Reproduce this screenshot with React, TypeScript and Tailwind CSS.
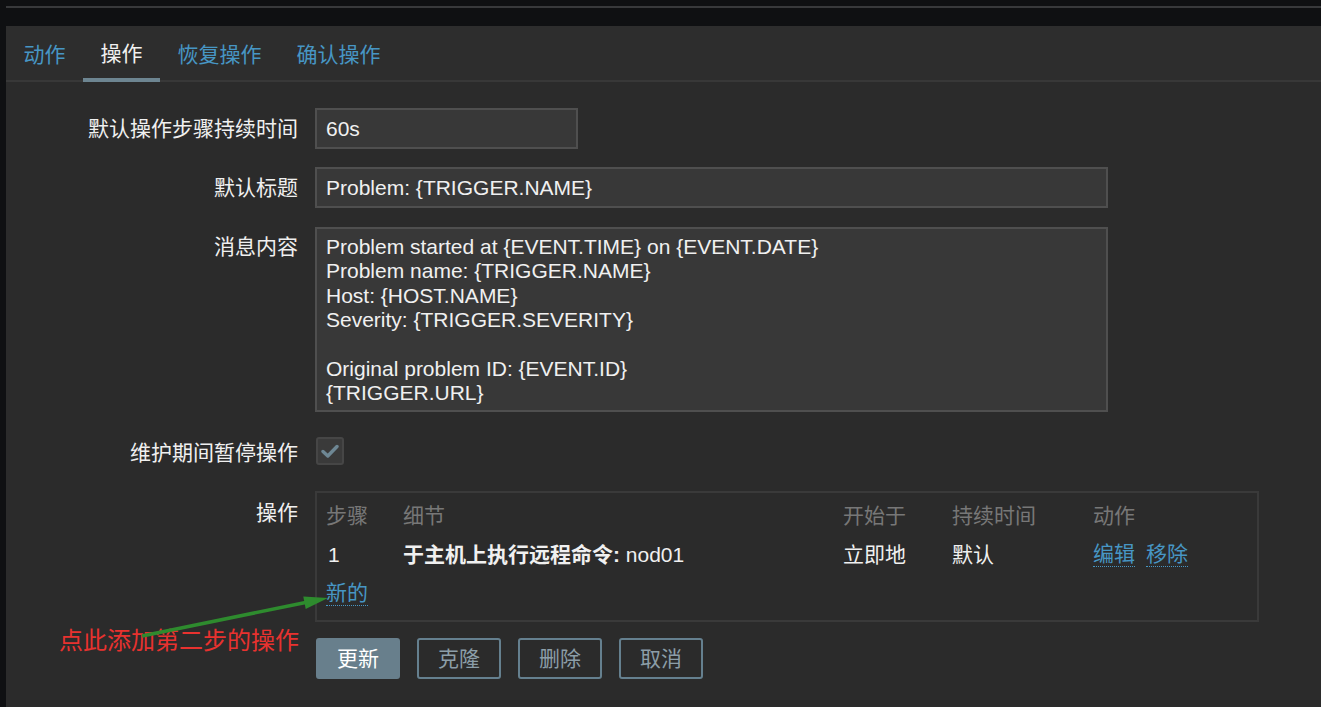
import React from 'react';

const FONT = 'font-["Liberation_Sans","Noto_Sans_CJK_SC",sans-serif]';

const tabs = ['动作', '操作', '恢复操作', '确认操作'];

const message = `Problem started at {EVENT.TIME} on {EVENT.DATE}
Problem name: {TRIGGER.NAME}
Host: {HOST.NAME}
Severity: {TRIGGER.SEVERITY}

Original problem ID: {EVENT.ID}
{TRIGGER.URL}`;

function Label({ children, className = '' }: { children: React.ReactNode; className?: string }) {
  return (
    <div className={`w-[292px] shrink-0 text-right text-[21px] text-[#f0f0f0] ${className}`}>{children}</div>
  );
}

function Link({ children }: { children: React.ReactNode }) {
  return (
    <span className="border-b border-dotted border-[#4796c4] leading-[24px] text-[#4796c4] cursor-pointer">
      {children}
    </span>
  );
}

export default function App() {
  return (
    <div className={`relative flex min-h-[707px] w-[1321px] flex-col overflow-hidden bg-[#0f1012] ${FONT}`}>
      {/* top strip */}
      <div className="h-[26px] pl-[6px] pt-[6px]">
        <div className="h-[2px] bg-[#38393b]" />
      </div>

      <div className="flex flex-1 pl-[6px]">
        <div className="flex-1 bg-[#2b2b2b]">
          {/* Tabs */}
          <div className="flex h-[56px] border-b-2 border-[#383838] bg-[#2d2d2d]">
            {tabs.map((t) => (
              <div
                key={t}
                className={`flex items-center px-[17.5px] pt-[3px] text-[21px] ${
                  t === '操作'
                    ? 'relative z-10 -mb-[2px] border-b-4 border-[#6d8591] text-[#f0f0f0]'
                    : 'text-[#4796c4]'
                }`}
              >
                {t}
              </div>
            ))}
          </div>

          {/* Form */}
          <div className="flex flex-col pt-[26px]">
            <div className="flex items-center gap-[17px]">
              <Label>默认操作步骤持续时间</Label>
              <div className="flex h-[41px] w-[263px] items-center border-2 border-[#4f4f4f] bg-[#383838] pl-[9px] text-[21px] text-[#f0f0f0]">
                60s
              </div>
            </div>

            <div className="mt-[18px] flex items-center gap-[17px]">
              <Label>默认标题</Label>
              <div className="flex h-[41px] w-[793px] items-center border-2 border-[#4f4f4f] bg-[#383838] pl-[9px] text-[21px] text-[#f0f0f0]">
                {'Problem: {TRIGGER.NAME}'}
              </div>
            </div>

            <div className="mt-[19px] flex items-start gap-[17px]">
              <Label className="pt-[8px] leading-[24.4px]">消息内容</Label>
              <div className="h-[185px] w-[793px] overflow-hidden whitespace-pre border-2 border-[#4f4f4f] bg-[#383838] px-[9px] pb-[4px] pt-[6px] text-[21px] leading-[24.4px] text-[#f0f0f0]">
                {message}
              </div>
            </div>

            <div className="mt-[19px] flex h-[40px] items-center gap-[18px]">
              <Label className="pt-[4px]">维护期间暂停操作</Label>
              <div className="flex h-[28px] w-[28px] items-center justify-center rounded-[3px] border-2 border-[#464646] bg-[#3a3a3a]">
                <svg width="18" height="14" viewBox="0 0 18 14" fill="none">
                  <path d="M2 7.5 L6.8 12 L16 2.5" stroke="#6e8794" strokeWidth="3.4" strokeLinecap="round" strokeLinejoin="round" />
                </svg>
              </div>
            </div>

            <div className="mt-[20px] flex items-start gap-[17px]">
              <Label className="pt-[6px]">操作</Label>
              <div className="w-[944px] border-2 border-[#3a3a3a] pb-[7px] pl-[9px] pt-[3px] text-[21px]">
                <div className="grid h-[39px] grid-cols-[77px_440px_109px_141px_1fr] items-center text-[#777777]">
                  <span>步骤</span>
                  <span>细节</span>
                  <span>开始于</span>
                  <span>持续时间</span>
                  <span>动作</span>
                </div>
                <div className="grid h-[39px] grid-cols-[77px_440px_109px_141px_1fr] items-center text-[#f0f0f0]">
                  <span className="pl-[2px]">1</span>
                  <span>
                    <b className="font-bold">于主机上执行远程命令:</b> nod01
                  </span>
                  <span>立即地</span>
                  <span>默认</span>
                  <span className="flex gap-[11px]">
                    <Link>编辑</Link>
                    <Link>移除</Link>
                  </span>
                </div>
                <div className="flex h-[39px] items-center">
                  <Link>新的</Link>
                </div>
              </div>
            </div>

            <div className="mt-[16px] flex gap-[17px] pl-[310px]">
              <button className="h-[41px] w-[84px] rounded-[3px] border-2 border-[#687f8c] bg-[#687f8c] text-[21px] text-white">
                更新
              </button>
              {['克隆', '删除', '取消'].map((b) => (
                <button
                  key={b}
                  className="h-[41px] w-[84px] rounded-[3px] border-2 border-[#65808f] text-[21px] text-[#8c9ea8]"
                >
                  {b}
                </button>
              ))}
            </div>
          </div>
        </div>
      </div>

      {/* annotation overlay */}
      <div className="absolute left-[59px] top-[626px] text-[24px] leading-[30px] text-[#e8322f]">点此添加第二步的操作</div>
      <svg className="pointer-events-none absolute left-0 top-0" width="1321" height="707">
        <line x1="142" y1="636" x2="308" y2="602" stroke="#2e8b2e" strokeWidth="3.5" />
        <polygon points="328,598 305.7,609 303.3,596.5" fill="#2e8b2e" />
      </svg>
    </div>
  );
}
